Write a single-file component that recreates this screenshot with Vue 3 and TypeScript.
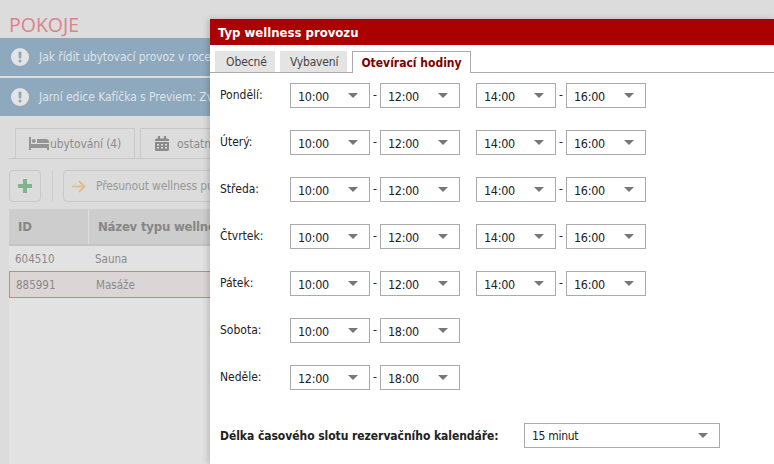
<script setup lang="ts">
interface Row { day: string; times: string[] }
const rows: Row[] = [
  { day: 'Pondělí:', times: ['10:00', '12:00', '14:00', '16:00'] },
  { day: 'Úterý:', times: ['10:00', '12:00', '14:00', '16:00'] },
  { day: 'Středa:', times: ['10:00', '12:00', '14:00', '16:00'] },
  { day: 'Čtvrtek:', times: ['10:00', '12:00', '14:00', '16:00'] },
  { day: 'Pátek:', times: ['10:00', '12:00', '14:00', '16:00'] },
  { day: 'Sobota:', times: ['10:00', '18:00'] },
  { day: 'Neděle:', times: ['12:00', '18:00'] },
]
</script>

<template>
  <div class="page">
    <h1 class="title">POKOJE</h1>
    <div class="notice first">
      <svg class="ni" viewBox="0 0 18 18"><circle cx="9" cy="9" r="9" fill="#e4e4e4"/><rect x="7.6" y="3.6" width="2.8" height="7" rx="1" fill="#8ea8be"/><rect x="7.6" y="11.8" width="2.8" height="2.6" rx="0.8" fill="#8ea8be"/></svg>
      <span>Jak řídit ubytovací provoz v roce</span>
    </div>
    <div class="notice second">
      <svg class="ni" viewBox="0 0 18 18"><circle cx="9" cy="9" r="9" fill="#e4e4e4"/><rect x="7.6" y="3.6" width="2.8" height="7" rx="1" fill="#8ea8be"/><rect x="7.6" y="11.8" width="2.8" height="2.6" rx="0.8" fill="#8ea8be"/></svg>
      <span>Jarní edice Kafíčka s Previem: Zv</span>
    </div>
    <div class="main">
      <div class="ptabs">
        <div class="ptab one">
          <svg width="20" height="13" viewBox="0 0 20 13"><path d="M0 0h2v7h18v6h-2v-2H2v2H0z" fill="#959595"/><circle cx="4.8" cy="4" r="2" fill="#959595"/><path d="M8 2h9a3 3 0 0 1 3 3v1H8z" fill="#959595"/></svg>
          <span>ubytování (4)</span>
        </div>
        <div class="ptab two">
          <svg width="14" height="15" viewBox="0 0 14 15"><path d="M0 4a1.500 1.500 0 0 1 1.500-1.500H3V0h2v2.500h4V0h2v2.500h1.500A1.500 1.500 0 0 1 14 4v1H0zM0 6h14v7.500a1.500 1.500 0 0 1-1.500 1.500h-11A1.500 1.500 0 0 1 0 13.500z" fill="#8a8a8a"/><path d="M2 8h2v1.500H2zM6 8h2v1.500H6zM10 8h2v1.500h-2zM2 11h2v1.500H2zM6 11h2v1.500H6zM10 11h2v1.500h-2z" fill="#dcdcdc"/></svg>
          <span>ostatní</span>
        </div>
      </div>
      <div class="toolbar">
        <div class="btn add">
          <svg width="16" height="16" viewBox="0 0 16 16"><path d="M6 1h4v5h5v4h-5v5H6v-5H1V6h5z" fill="#7fb58e"/></svg>
        </div>
        <div class="sep"></div>
        <div class="btn move">
          <svg width="14" height="13" viewBox="0 0 14 13"><path d="M0 6.500h12.500M7 1l5.500 5.500L7 12" fill="none" stroke="#e2bd8e" stroke-width="2"/></svg>
          <span>Přesunout wellness pu</span>
        </div>
      </div>
      <div class="thead">
        <div class="c1">ID</div>
        <div class="c2">Název typu wellness</div>
      </div>
      <div class="trow"><span class="c1">604510</span><span class="c2">Sauna</span></div>
      <div class="trow selected"><span class="c1">885991</span><span class="c2">Masáže</span></div>
    </div>

    <section class="modal">
      <header class="mhead">Typ wellness provozu</header>
      <nav class="tabs">
        <div class="tab t1">Obecné</div>
        <div class="tab t2">Vybavení</div>
        <div class="tab active">Otevírací hodiny</div>
      </nav>
      <div class="days">
        <div v-for="r in rows" :key="r.day" class="day">
          <div class="dname">{{ r.day }}</div>
          <div class="pair">
            <div class="sel"><span>{{ r.times[0] }}</span><i class="arrow"></i></div>
            <span class="dash">-</span>
            <div class="sel"><span>{{ r.times[1] }}</span><i class="arrow"></i></div>
          </div>
          <div v-if="r.times.length > 2" class="pair second-pair">
            <div class="sel"><span>{{ r.times[2] }}</span><i class="arrow"></i></div>
            <span class="dash">-</span>
            <div class="sel"><span>{{ r.times[3] }}</span><i class="arrow"></i></div>
          </div>
        </div>
      </div>
      <div class="slot">
        <label>Délka časového slotu rezervačního kalendáře:</label>
        <div class="sel wide"><span>15 minut</span><i class="arrow"></i></div>
      </div>
    </section>
  </div>
</template>

<style scoped>
.page {
  position: relative;
  width: 774px;
  height: 464px;
  overflow: hidden;
  background: #dcdcdc;
  font-family: "DejaVu Sans Condensed", "DejaVu Sans", sans-serif;
  font-size: 12px;
  color: #222;
}
.title {
  margin: 0;
  height: 38px;
  padding: 13px 0 0 9px;
  box-sizing: border-box;
  font-family: "Open Sans", sans-serif;
  font-weight: 400;
  font-size: 19.5px;
  line-height: 24px;
  color: #d9838c;
}
.notice {
  display: flex;
  align-items: center;
  gap: 10px;
  height: 38px;
  padding-left: 11px;
  background: #8ea8be;
  color: #dfe4e8;
  letter-spacing: -0.05px;
}
.notice.second { margin-top: 2px; }
.ni { width: 18px; height: 18px; flex: none; }
.main {
  margin: 12px 0 0 9px;
  height: 336px;
  background: #e2e2e2;
  color: #8a8a8a;
}
.ptabs {
  display: flex;
  gap: 5px;
  height: 30px;
  border-bottom: 1px solid #c8c8c8;
  background: #dcdcdc;
  padding-left: 6px;
}
.ptab {
  display: flex;
  align-items: center;
  gap: 2px;
  height: 30px;
  border: 1px solid #c8c8c8;
  border-bottom: 0;
  box-sizing: border-box;
  color: #8c8c8c;
}
.ptab.one { width: 120px; padding-left: 13px; gap: 1px; letter-spacing: -0.1px; }
.ptab.two { width: 80px; padding-left: 14px; gap: 8px; }
.toolbar {
  display: flex;
  align-items: flex-start;
  height: 50px;
  padding-top: 11px;
  box-sizing: border-box;
  background: #dcdcdc;
}
.btn {
  display: flex;
  align-items: center;
  height: 32px;
  border: 1px solid #c8c8c8;
  border-radius: 4px;
  box-sizing: border-box;
}
.btn.add { width: 32px; justify-content: center; }
.sep { width: 1px; height: 30px; margin: 1px 10px 0 11px; background: #cdcdcd; }
.btn.move {
  width: 220px;
  padding-left: 8px;
  gap: 10px;
  color: #999;
  white-space: nowrap;
  overflow: hidden;
  letter-spacing: -0.15px;
}
.thead {
  display: flex;
  align-items: center;
  height: 37px;
  background: #cdcdcd;
  border-bottom: 2px solid #c4c4c4;
  box-sizing: border-box;
  font-weight: 700;
  font-size: 13px;
  letter-spacing: -0.2px;
  color: #868686;
}
.thead .c1 {
  width: 80px;
  padding-left: 9px;
  box-sizing: border-box;
  height: 35px;
  line-height: 35px;
  border-right: 1px solid #dcdcdc;
  margin-right: 9px;
}
.trow {
  display: flex;
  align-items: center;
  height: 25px;
  padding-left: 6px;
  white-space: nowrap;
  font-size: 11.5px;
}
.trow .c1 { width: 80px; }
.trow.selected {
  height: 27px;
  background: #dcd5d5;
  border: 1px solid #bf8a8a;
  box-sizing: border-box;
}
.modal {
  position: absolute;
  left: 210px;
  top: 19px;
  width: 564px;
  height: 445px;
  background: #fff;
  box-shadow: -2px 0 6px rgba(0, 0, 0, 0.18);
  color: #222;
}
.mhead {
  height: 26px;
  padding-left: 8px;
  background: #ac0000;
  color: #fff;
  font-weight: 700;
  font-size: 13px;
  line-height: 28px;
}
.tabs {
  display: flex;
  gap: 5px;
  height: 28px;
  padding: 6px 0 0 5px;
  box-sizing: border-box;
  border-bottom: 1px solid #aaa;
}
.tab {
  height: 21px;
  line-height: 23px;
  background: #e4e4e4;
  color: #444;
  box-sizing: border-box;
  white-space: nowrap;
}
.t1 { width: 60px; padding-left: 11px; letter-spacing: -0.1px; }
.t2 { width: 67px; padding-left: 10px; letter-spacing: -0.2px; }
.tab.active {
  width: 119px;
  height: 22px;
  text-align: center;
  background: #fff;
  border: 1px solid #aaa;
  border-bottom: 0;
  color: #7d0000;
  font-weight: 700;
  z-index: 1;
  line-height: 22px;
}
.days { padding-top: 10px; }
.day {
  display: flex;
  height: 47px;
  padding-left: 10px;
}
.dname { width: 70px; padding-top: 4px; line-height: 16px; }
.pair { display: flex; align-items: flex-start; }
.second-pair { margin-left: 16px; }
.dash { width: 10px; text-align: center; line-height: 25px; }
.sel {
  position: relative;
  display: flex;
  align-items: center;
  width: 80px;
  height: 25px;
  padding: 1px 0 0 7px;
  box-sizing: border-box;
  border: 1px solid #aaa;
  background: #fff;
  font-size: 12.5px;
  letter-spacing: -0.3px;
}
.arrow {
  position: absolute;
  right: 11px;
  top: 9px;
  width: 0;
  height: 0;
  border-left: 5px solid transparent;
  border-right: 5px solid transparent;
  border-top: 5px solid #777;
}
.slot {
  display: flex;
  align-items: center;
  margin-top: 11px;
  padding-left: 10px;
}
.slot label { width: 304px; font-weight: 700; white-space: nowrap; letter-spacing: -0.05px; }
.sel.wide { width: 196px; font-size: 12px; }
</style>
